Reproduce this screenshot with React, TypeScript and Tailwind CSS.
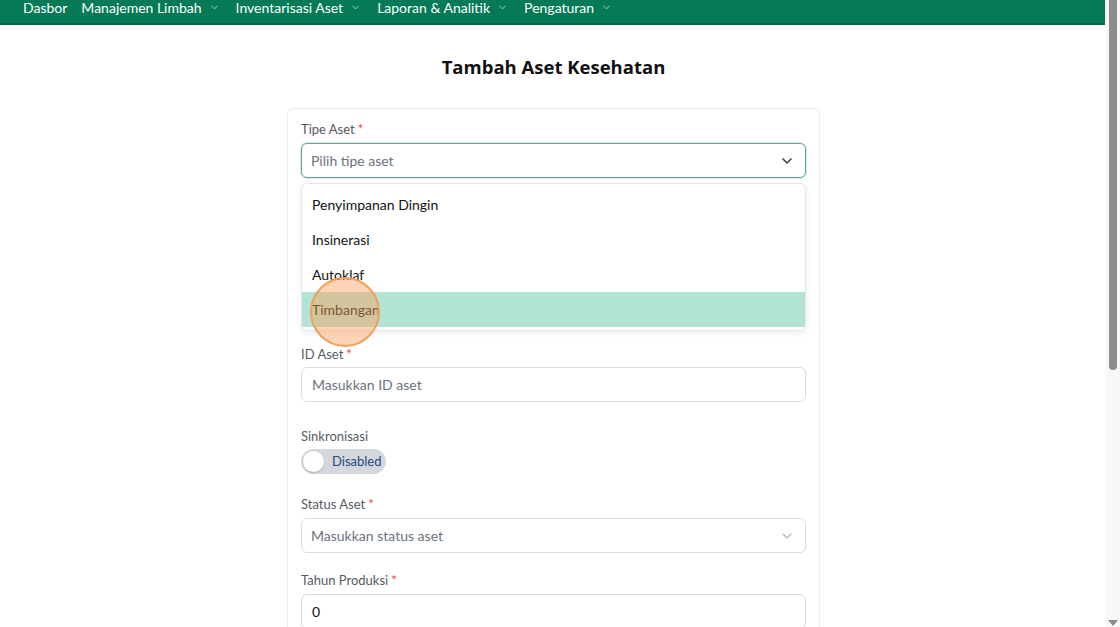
import { ChevronDown } from 'lucide-react';

const navItems = [
  { label: 'Dasbor', menu: false },
  { label: 'Manajemen Limbah', menu: true },
  { label: 'Inventarisasi Aset', menu: true },
  { label: 'Laporan & Analitik', menu: true },
  { label: 'Pengaturan', menu: true },
];

const tipeOptions = ['Penyimpanan Dingin', 'Insinerasi', 'Autoklaf', 'Timbangan'];

function Label({ text, required, tight }: { text: string; required?: boolean; tight?: boolean }) {
  return (
    <div className={`${tight ? 'mb-[4px]' : 'mb-[5px]'} text-[13px] leading-[18px] text-[#555b63]`}>
      {text}
      {required && <span className="ml-[3px] text-[#ef4444]">*</span>}
    </div>
  );
}

export default function App() {
  return (
    <div className="flex h-[627px] w-[1120px] overflow-hidden bg-white font-['Lato',sans-serif]">
      <div className="relative flex-1">
        {/* Top navigation (page is scrolled, so it is cut off) */}
        <nav className="flex h-[25px] items-start gap-[14px] border-b-2 border-[#05674a] bg-[#067a56] pl-[23px] text-[14px] leading-[15px] text-white">
          {navItems.map((item) => (
            <div key={item.label} className="flex items-center gap-[7px]">
              <span>{item.label}</span>
              {item.menu && (
                <ChevronDown className="mr-[2px] h-[11px] w-[11px] text-[#b9dccf]" strokeWidth={2} />
              )}
            </div>
          ))}
        </nav>

        <main className="flex flex-col items-center pl-[2px]">
          <h1 className="mt-[28px] font-['Open_Sans',sans-serif] text-[18.5px] font-bold leading-[28px] text-[#111]">
            Tambah Aset Kesehatan
          </h1>

          <div className="mt-[27px] w-[533px] rounded-md border border-[#ececec] px-[13px] pt-[11px] pb-[20px]">
            {/* Tipe Aset with open dropdown */}
            <div className="relative">
              <Label text="Tipe Aset" required />
              <div className="flex h-[35px] items-center justify-between rounded-md border border-[#5da98d] pl-[9px] pr-[10px] shadow-[0_0_0_1px_rgba(93,169,141,0.25)]">
                <span className="text-[14px] text-[#6b7280]">Pilih tipe aset</span>
                <ChevronDown className="h-[16px] w-[16px] text-[#444]" strokeWidth={2.5} />
              </div>
              <ul className="absolute left-0 right-0 top-full z-10 mt-[5px] overflow-hidden rounded-md border border-[#e5e7eb] bg-white py-[3px] shadow-[0_2px_6px_rgba(0,0,0,0.08)]">
                {tipeOptions.map((opt) => (
                  <li
                    key={opt}
                    className={`flex h-[35px] items-center pl-[10px] text-[14px] text-[#111] ${
                      opt === 'Timbangan' ? 'bg-[#b3e3d4]' : ''
                    }`}
                  >
                    {opt}
                  </li>
                ))}
              </ul>
            </div>

            {/* ID Aset */}
            <div className="mt-[167px]">
              <Label text="ID Aset" required tight />
              <div className="flex h-[35px] items-center rounded-md border border-[#dcdcdc] pl-[10px]">
                <span className="text-[14px] text-[#6b7280]">Masukkan ID aset</span>
              </div>
            </div>

            {/* Sinkronisasi toggle */}
            <div className="mt-[25px]">
              <Label text="Sinkronisasi" tight />
              <div className="flex h-[25px] w-[85px] items-center gap-[8px] rounded-full bg-[#d4d7dd] pl-[2px]">
                <span className="h-[21px] w-[21px] rounded-full bg-white shadow-[0_1px_2px_rgba(0,0,0,0.2)]" />
                <span className="text-[13px] text-[#27497a]">Disabled</span>
              </div>
            </div>

            {/* Status Aset */}
            <div className="mt-[21px]">
              <Label text="Status Aset" required />
              <div className="flex h-[35px] items-center justify-between rounded-md border border-[#dcdcdc] pl-[9px] pr-[10px]">
                <span className="text-[14px] text-[#6b7280]">Masukkan status aset</span>
                <ChevronDown className="h-[16px] w-[16px] text-[#b5b5b5]" strokeWidth={1.75} />
              </div>
            </div>

            {/* Tahun Produksi */}
            <div className="mt-[18px]">
              <Label text="Tahun Produksi" required />
              <div className="flex h-[35px] items-center rounded-md border border-[#dcdcdc] pl-[10px]">
                <span className="text-[14px] text-[#111]">0</span>
              </div>
            </div>
          </div>
        </main>

        {/* Click indicator */}
        <div className="pointer-events-none absolute left-[310px] top-[277px] z-20 h-[70px] w-[70px] rounded-full border-2 border-[#f5a05a] bg-[rgba(248,160,90,0.45)]" />
      </div>

      {/* Scrollbar */}
      <div className="relative flex w-[15px] flex-col items-center bg-[#f8f8f8]">
        <div className="h-[370px] w-[8px] rounded-b-full bg-[#8c8c8c]" />
        <div className="absolute bottom-[1px] h-0 w-0 border-x-[5px] border-t-[6px] border-x-transparent border-t-[#8c8c8c]" />
      </div>
    </div>
  );
}
